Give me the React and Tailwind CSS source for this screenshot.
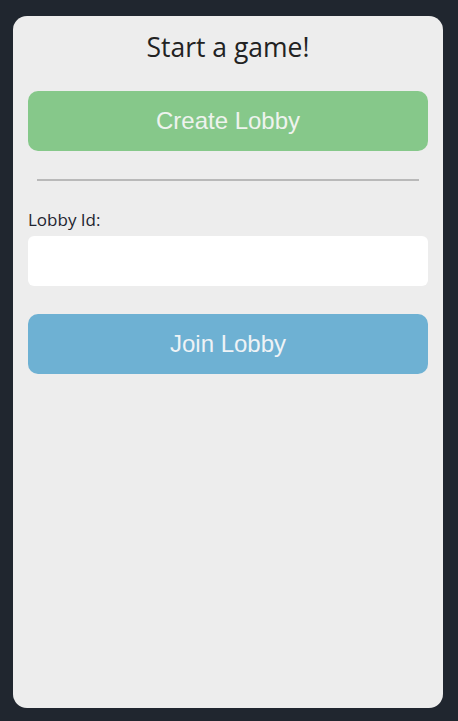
export default function App() {
  return (
    <div className="min-h-[721px] w-full bg-[#20262f] pl-[13px] pr-[15px] pt-[16px] pb-[13px] flex">
      <div className="flex-1 min-h-[692px] bg-[#ededed] rounded-[14px] px-[15px] flex flex-col">
        <h1 className="text-center text-[26.5px] leading-[30px] mt-[16px] text-[#222] font-['Open_Sans',sans-serif]">
          Start a game!
        </h1>
        <button className="mt-[29px] h-[60px] w-full rounded-[10px] bg-[#86c88a] text-[#eef3ee] text-[24px] font-['Liberation_Sans',Arial,sans-serif]">
          Create Lobby
        </button>
        <div className="mt-[28px] mx-[9px] h-[2px] bg-[#b9b9b9]" />
        <label className="mt-[29px] text-[17px] leading-[20px] text-[#1e2430] font-['Open_Sans',sans-serif]">
          Lobby Id:
        </label>
        <input className="mt-[6px] h-[50px] w-full rounded-[6px] bg-white outline-none px-3" />
        <button className="mt-[28px] h-[60px] w-full rounded-[10px] bg-[#6eb1d3] text-[#eef3f6] text-[24px] font-['Liberation_Sans',Arial,sans-serif]">
          Join Lobby
        </button>
      </div>
    </div>
  );
}
